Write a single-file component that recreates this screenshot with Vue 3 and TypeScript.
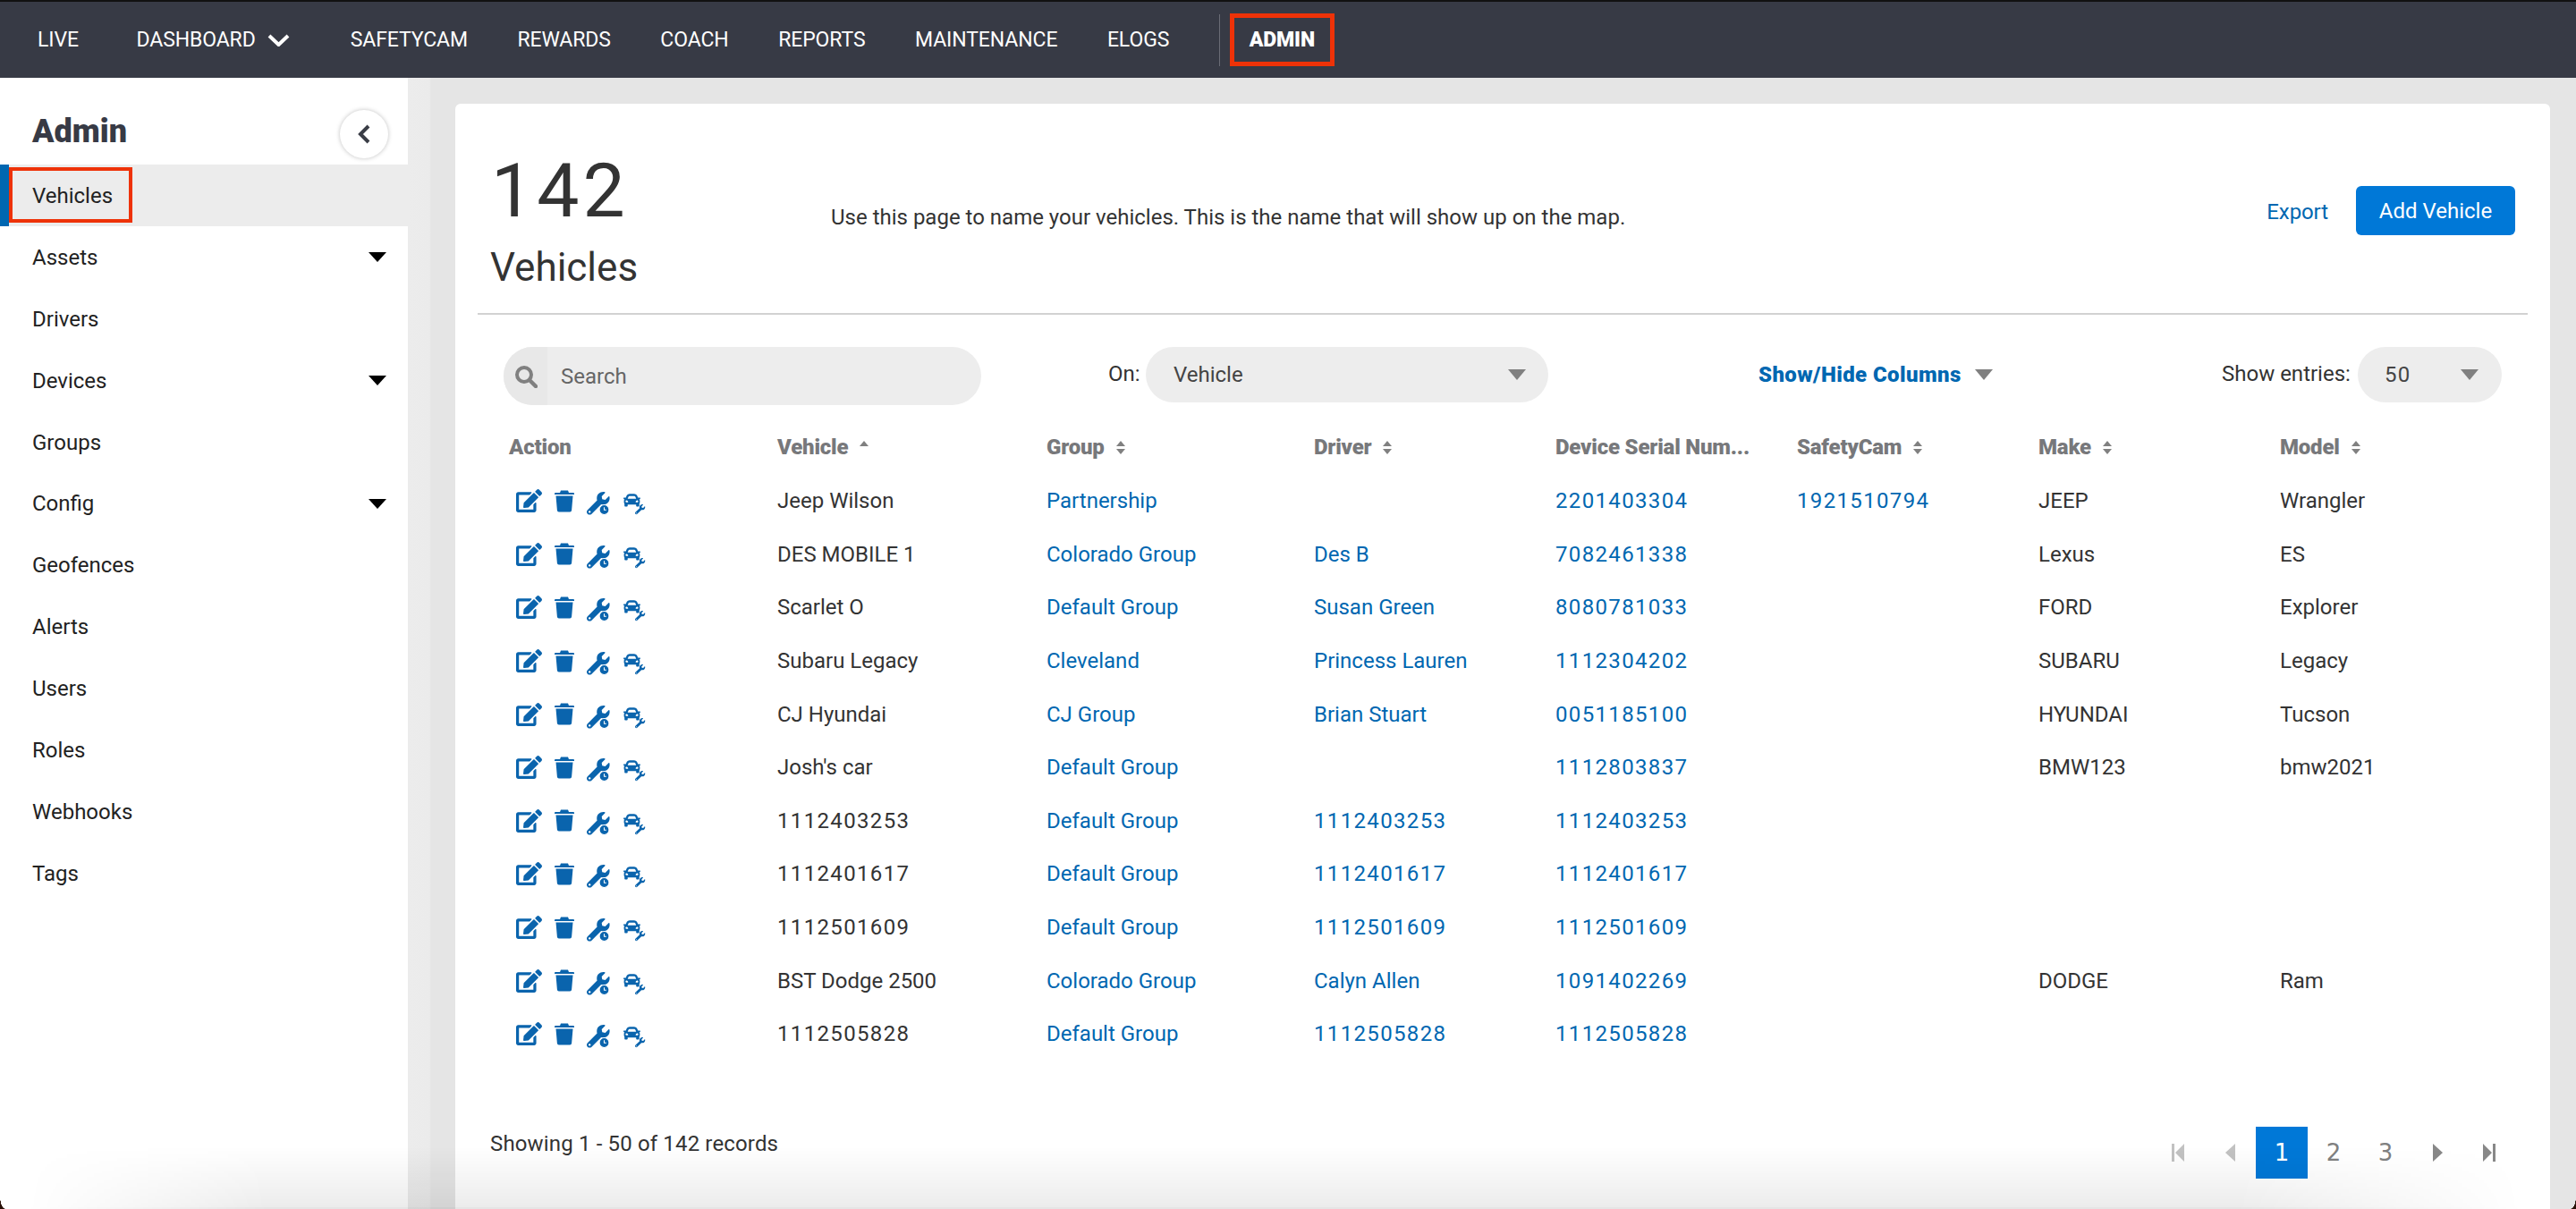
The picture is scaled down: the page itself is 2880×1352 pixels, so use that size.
<script setup lang="ts">
interface Row {
  vehicle: string
  group: string
  driver: string
  serial: string
  cam: string
  make: string
  model: string
}
const navItems = ['SAFETYCAM', 'REWARDS', 'COACH', 'REPORTS', 'MAINTENANCE', 'ELOGS']
const sideItems = [
  { name: 'Vehicles', caret: false, active: true },
  { name: 'Assets', caret: true, active: false },
  { name: 'Drivers', caret: false, active: false },
  { name: 'Devices', caret: true, active: false },
  { name: 'Groups', caret: false, active: false },
  { name: 'Config', caret: true, active: false },
  { name: 'Geofences', caret: false, active: false },
  { name: 'Alerts', caret: false, active: false },
  { name: 'Users', caret: false, active: false },
  { name: 'Roles', caret: false, active: false },
  { name: 'Webhooks', caret: false, active: false },
  { name: 'Tags', caret: false, active: false },
]
const columns = [
  { label: 'Vehicle', sort: 'up' },
  { label: 'Group', sort: 'both' },
  { label: 'Driver', sort: 'both' },
  { label: 'Device Serial Num...', sort: 'none' },
  { label: 'SafetyCam', sort: 'both' },
  { label: 'Make', sort: 'both' },
  { label: 'Model', sort: 'both' },
]
const rows: Row[] = [
  { vehicle: 'Jeep Wilson', group: 'Partnership', driver: '', serial: '2201403304', cam: '1921510794', make: 'JEEP', model: 'Wrangler' },
  { vehicle: 'DES MOBILE 1', group: 'Colorado Group', driver: 'Des B', serial: '7082461338', cam: '', make: 'Lexus', model: 'ES' },
  { vehicle: 'Scarlet O', group: 'Default Group', driver: 'Susan Green', serial: '8080781033', cam: '', make: 'FORD', model: 'Explorer' },
  { vehicle: 'Subaru Legacy', group: 'Cleveland', driver: 'Princess Lauren', serial: '1112304202', cam: '', make: 'SUBARU', model: 'Legacy' },
  { vehicle: 'CJ Hyundai', group: 'CJ Group', driver: 'Brian Stuart', serial: '0051185100', cam: '', make: 'HYUNDAI', model: 'Tucson' },
  { vehicle: "Josh's car", group: 'Default Group', driver: '', serial: '1112803837', cam: '', make: 'BMW123', model: 'bmw2021' },
  { vehicle: '1112403253', group: 'Default Group', driver: '1112403253', serial: '1112403253', cam: '', make: '', model: '' },
  { vehicle: '1112401617', group: 'Default Group', driver: '1112401617', serial: '1112401617', cam: '', make: '', model: '' },
  { vehicle: '1112501609', group: 'Default Group', driver: '1112501609', serial: '1112501609', cam: '', make: '', model: '' },
  { vehicle: 'BST Dodge 2500', group: 'Colorado Group', driver: 'Calyn Allen', serial: '1091402269', cam: '', make: 'DODGE', model: 'Ram' },
  { vehicle: '1112505828', group: 'Default Group', driver: '1112505828', serial: '1112505828', cam: '', make: '', model: '' },
]
const isNum = (v: string): boolean => /^\d+$/.test(v)
const wrench = 'M507.73 109.1c-2.24-9.03-13.54-12.09-20.12-5.51l-74.36 74.36-67.88-11.31-11.31-67.88 74.36-74.36c6.62-6.62 3.43-17.9-5.66-20.16-47.38-11.74-99.55.91-136.58 37.93-39.64 39.64-50.55 97.1-34.05 147.2L18.74 402.76c-24.99 24.99-24.99 65.51 0 90.5 24.99 24.99 65.51 24.99 90.5 0l213.21-213.21c50.12 16.71 107.47 5.68 147.37-34.22 37.07-37.07 49.7-89.32 37.91-136.73zM64 472c-13.25 0-24-10.75-24-24 0-13.26 10.75-24 24-24s24 10.74 24 24c0 13.25-10.75 24-24 24z'
const car = 'M499.99 176h-59.87l-16.64-41.6C406.38 91.63 365.57 64 319.5 64h-127c-46.06 0-86.88 27.63-103.99 70.4L71.87 176H12.01C4.2 176-1.53 183.34.37 190.91l6 24C7.7 220.25 12.5 224 18.01 224h20.07C24.65 235.73 16 252.78 16 272v48c0 16.12 6.16 30.67 16 41.93V416c0 17.67 14.33 32 32 32h32c17.67 0 32-14.33 32-32v-32h256v32c0 17.67 14.33 32 32 32h32c17.67 0 32-14.33 32-32v-54.07c9.84-11.25 16-25.8 16-41.93v-48c0-19.22-8.65-36.27-22.07-48H494c5.51 0 10.31-3.75 11.64-9.09l6-24c1.89-7.57-3.84-14.91-11.65-14.91zm-352.06-17.83c7.29-18.22 24.94-30.17 44.57-30.17h127c19.63 0 37.28 11.95 44.57 30.17L384 208H128l19.93-49.83zM96 319.8c-19.2 0-32-12.76-32-31.9S76.8 256 96 256s48 28.71 48 47.85-28.8 15.95-48 15.95zm320 0c-19.2 0-48 3.19-48-15.95S396.8 256 416 256s32 12.76 32 31.9-12.8 31.9-32 31.9z'
const edit = 'M402.6 83.2l90.2 90.2c3.8 3.8 3.8 10 0 13.8L274.4 405.6l-92.8 10.3c-12.4 1.4-22.9-9.1-21.5-21.5l10.3-92.8L388.8 83.2c3.8-3.8 10-3.8 13.8 0zm162-22.9l-48.8-48.8c-15.2-15.2-39.9-15.2-55.2 0l-35.4 35.4c-3.8 3.8-3.8 10 0 13.8l90.2 90.2c3.8 3.8 10 3.8 13.8 0l35.4-35.4c15.2-15.3 15.2-40 0-55.2zM384 346.2V448H64V128h229.8c3.2 0 6.2-1.3 8.5-3.5l40-40c7.6-7.6 2.2-20.5-8.5-20.5H48C21.5 64 0 85.5 0 112v352c0 26.5 21.5 48 48 48h352c26.5 0 48-21.5 48-48V306.2c0-10.7-12.9-16-20.5-8.5l-40 40c-2.2 2.3-3.5 5.3-3.5 8.5z'
</script>

<template>
  <div class="app">
    <header class="nav">
      <span class="nav-link">LIVE</span>
      <span class="nav-link dash">
        DASHBOARD
        <svg class="dash-chev" width="25" height="14" viewBox="0 0 25 14"><path d="M2 2l10.500 10L23 2" fill="none" stroke="#fff" stroke-width="4" /></svg>
      </span>
      <span v-for="item in navItems" :key="item" class="nav-link">{{ item }}</span>
      <span class="nav-sep"></span>
      <span class="nav-admin">ADMIN</span>
    </header>

    <div class="body">
      <aside class="side">
        <div class="side-head">
          <h2 class="side-title">Admin</h2>
          <button class="collapse" type="button">
            <svg width="16" height="22" viewBox="0 0 16 22"><path d="M13 2L4 11l9 9" fill="none" stroke="#3a3d46" stroke-width="4" /></svg>
          </button>
        </div>
        <div
          v-for="item in sideItems"
          :key="item.name"
          class="side-item"
          :class="{ active: item.active }"
        >
          <span class="side-label">{{ item.name }}</span>
          <span v-if="item.caret" class="side-caret"></span>
        </div>
      </aside>

      <main class="main">
        <section class="card">
          <div class="head">
            <div class="count">
              <div class="count-num">142</div>
              <div class="count-name">Vehicles</div>
            </div>
            <p class="lead">Use this page to name your vehicles. This is the name that will show up on the map.</p>
            <a class="export">Export</a>
            <button class="add" type="button">Add Vehicle</button>
          </div>

          <div class="tools">
            <div class="search">
              <span class="search-icon">
                <svg width="26" height="26" viewBox="0 0 26 26"><circle cx="11" cy="11" r="8" fill="none" stroke="#808080" stroke-width="4" /><path d="M17 17l7 7" stroke="#808080" stroke-width="4.500" stroke-linecap="round" /></svg>
              </span>
              <span class="search-text">Search</span>
            </div>
            <span class="on-label">On:</span>
            <div class="pill on-select">
              <span>Vehicle</span>
              <i class="tri"></i>
            </div>
            <div class="showhide">
              <span>Show/Hide Columns</span>
              <i class="tri"></i>
            </div>
            <span class="entries-label">Show entries:</span>
            <div class="pill entries">
              <span class="num">50</span>
              <i class="tri"></i>
            </div>
          </div>

          <div class="table">
            <div class="tr th">
              <div class="cell">Action</div>
              <div v-for="col in columns" :key="col.label" class="cell">
                <span>{{ col.label }}</span>
                <svg v-if="col.sort !== 'none'" class="sort" width="12" height="15" viewBox="0 0 12 15">
                  <path d="M6 0l5 6H1z" fill="#808080" />
                  <path v-if="col.sort === 'both'" d="M6 15l5-6H1z" fill="#808080" />
                </svg>
              </div>
            </div>
            <div v-for="row in rows" :key="row.vehicle" class="tr">
              <div class="cell actions">
                <svg class="ic" width="29" height="26" viewBox="0 0 576 512"><path :d="edit" /></svg>
                <svg class="ic" width="22" height="25" viewBox="0 0 22 25"><path d="M7 .5h8l1 2.500h5a1 1 0 0 1 1 1v1H0V4a1 1 0 0 1 1-1h5zM1.500 6.500h19l-1.400 16.300a2 2 0 0 1-2 1.800H4.900a2 2 0 0 1-2-1.800z" /></svg>
                <svg class="ic low" width="27" height="26" viewBox="0 0 27 26">
                  <g transform="scale(.05)"><path :d="wrench" /></g>
                  <circle cx="19.500" cy="20" r="5.500" stroke="#fff" stroke-width="1.200" />
                  <path d="M19.500 17.200v3h2.300" fill="none" stroke="#fff" stroke-width="1.100" />
                </svg>
                <svg class="ic low" width="25" height="26" viewBox="0 0 25 26">
                  <g transform="scale(.037)"><path :d="car" /></g>
                  <g transform="translate(13 14) scale(.022)"><path :d="wrench" stroke="#fff" stroke-width="30" paint-order="stroke" /></g>
                </svg>
              </div>
              <div class="cell" :class="{ num: isNum(row.vehicle) }">{{ row.vehicle }}</div>
              <div class="cell link">{{ row.group }}</div>
              <div class="cell link" :class="{ num: isNum(row.driver) }">{{ row.driver }}</div>
              <div class="cell link num">{{ row.serial }}</div>
              <div class="cell link num">{{ row.cam }}</div>
              <div class="cell">{{ row.make }}</div>
              <div class="cell">{{ row.model }}</div>
            </div>
          </div>

          <div class="foot">
            <span class="showing">Showing 1 - 50 of 142 records</span>
            <nav class="pager">
              <span class="pg off"><svg width="14" height="20" viewBox="0 0 14 20"><path d="M0 0h3v20H0zM14 0v20L4 10z" /></svg></span>
              <span class="pg off"><svg width="11" height="20" viewBox="0 0 11 20"><path d="M11 0v20L0 10z" /></svg></span>
              <span class="pg current">1</span>
              <span class="pg">2</span>
              <span class="pg">3</span>
              <span class="pg"><svg width="11" height="20" viewBox="0 0 11 20"><path d="M0 0v20l11-10z" /></svg></span>
              <span class="pg"><svg width="14" height="20" viewBox="0 0 14 20"><path d="M0 0v20l10-10zM11 0h3v20h-3z" /></svg></span>
            </nav>
          </div>
        </section>
      </main>
    </div>
    <div class="shade"></div>
    <span class="corner left"></span>
    <span class="corner right"></span>
  </div>
</template>

<style>
html,
body {
  margin: 0;
  background: #fff;
}
</style>

<style scoped>
.app {
  position: relative;
  width: 2880px;
  height: 1352px;
  overflow: hidden;
  display: flex;
  flex-direction: column;
  font-family: Roboto, "Liberation Sans", sans-serif;
  font-size: 24px;
  color: #333;
}
.nav {
  box-sizing: border-box;
  height: 87px;
  flex: none;
  display: flex;
  align-items: center;
  padding-left: 42px;
  background: #373a45;
  border-top: 2px solid #111;
  color: #fff;
  font-size: 23px;
  letter-spacing: -0.1px;
}
.nav-link {
  margin-right: 55.5px;
  white-space: nowrap;
}
.dash {
  display: flex;
  align-items: center;
  margin-left: 9px;
  margin-right: 68px;
}
.dash-chev {
  margin-left: 13px;
}
.nav-sep {
  width: 1px;
  height: 58px;
  background: #6a6c75;
  margin-right: 11px;
}
.nav-admin {
  box-sizing: border-box;
  width: 117px;
  height: 59px;
  border: 5px solid #ee3208;
  display: flex;
  align-items: center;
  justify-content: center;
  font-weight: 900;
}
.body {
  flex: 1;
  display: flex;
  min-height: 0;
}
.side {
  width: 456px;
  flex: none;
  background: #fff;
}
.side-head {
  box-sizing: border-box;
  height: 97px;
  display: flex;
  align-items: center;
  justify-content: space-between;
  padding: 23px 22px 0 36px;
}
.side-title {
  margin: 0;
  font-size: 36px;
  font-weight: 900;
  color: #373a45;
}
.collapse {
  width: 54px;
  height: 54px;
  border: none;
  border-radius: 50%;
  background: #fff;
  box-shadow: 0 0 5px rgba(0, 0, 0, 0.25);
  display: flex;
  align-items: center;
  justify-content: center;
  padding: 0;
  margin-top: 6px;
}
.side-item {
  box-sizing: border-box;
  height: 68.9px;
  display: flex;
  align-items: center;
  justify-content: space-between;
  padding: 1px 24px 0 36px;
  color: #222;
}
.side-caret {
  width: 0;
  height: 0;
  border-left: 10px solid transparent;
  border-right: 10px solid transparent;
  border-top: 11px solid #000;
}
.side-item.active {
  background: #ececec;
  border-left: 10px solid #0067b1;
  padding: 0;
}
.active .side-label {
  box-sizing: border-box;
  width: 138px;
  height: 62px;
  border: 4px solid #ee3208;
  display: flex;
  align-items: center;
  padding: 2px 0 0 22px;
}
.main {
  flex: 1;
  min-width: 0;
  padding: 29px 29px 0 53px;
  background: linear-gradient(to right, #ececec 0, #ebebeb 24px, #e5e5e5 26px);
}
.card {
  height: 100%;
  box-sizing: border-box;
  background: #fff;
  border-radius: 6px 6px 0 0;
  padding: 0 25px;
}
.head {
  box-sizing: border-box;
  height: 236px;
  display: flex;
  align-items: center;
  border-bottom: 2px solid #d2d2d2;
}
.count {
  width: 381px;
  padding-left: 14px;
  box-sizing: content-box;
  flex: none;
  padding-top: 26px;
}
.count-num {
  font-size: 84px;
  line-height: 96px;
  letter-spacing: 4px;
  margin-left: 1px;
}
.count-name {
  font-size: 44px;
  line-height: 56px;
  margin-top: 9px;
}
.lead {
  margin: 20px 0 0;
  flex: 1;
  color: #333;
}
.export {
  color: #0067b1;
  margin-top: 7px;
  margin-right: 31px;
  letter-spacing: -0.1px;
}
.add {
  box-sizing: border-box;
  width: 178px;
  height: 55px;
  margin-right: 14px;
  margin-top: 5px;
  border: none;
  border-radius: 6px;
  background: #0078d7;
  color: #fff;
  font: inherit;
  padding: 0;
}
.tools {
  display: flex;
  align-items: flex-start;
  padding-top: 36px;
  height: 65px;
  margin-left: 29px;
}
.search {
  width: 534px;
  height: 65px;
  border-radius: 33px;
  background: #ededed;
  display: flex;
  align-items: center;
  overflow: hidden;
  color: #666;
}
.search-icon {
  width: 49px;
  height: 100%;
  flex: none;
  background: #e8e8e8;
  display: flex;
  align-items: center;
  padding-left: 12px;
  box-sizing: border-box;
}
.search-text {
  margin-left: 15px;
}
.on-label {
  margin-left: 142px;
  width: 42px;
  line-height: 60px;
  color: #333;
}
.pill {
  height: 62px;
  border-radius: 31px;
  background: #ededed;
  display: flex;
  align-items: center;
  justify-content: space-between;
  box-sizing: border-box;
  color: #444;
}
.on-select {
  width: 450px;
  padding: 0 25px 0 31px;
}
.tri {
  display: block;
  width: 0;
  height: 0;
  border-left: 10px solid transparent;
  border-right: 10px solid transparent;
  border-top: 12px solid #808080;
}
.showhide {
  margin-left: 235px;
  width: 262px;
  height: 62px;
  display: flex;
  align-items: center;
  justify-content: space-between;
  color: #0067b1;
  font-weight: 900;
  letter-spacing: 0.4px;
}
.entries-label {
  margin-left: 256px;
  width: 152px;
  line-height: 60px;
  color: #333;
}
.entries {
  width: 161px;
  padding: 0 26px 0 30px;
}
.table {
  margin: 17px 0 0 35px;
}
.tr {
  display: grid;
  grid-template-columns: 300px 301px 299px 270px 270px 270px 270px 1fr;
  height: 59.6px;
  align-items: center;
  padding-top: 1px;
  box-sizing: border-box;
}
.th {
  height: 60px;
  color: #77787b;
  font-weight: 900;
  letter-spacing: -0.2px;
  padding-top: 0;
}
.cell {
  display: flex;
  align-items: center;
  white-space: nowrap;
  min-width: 0;
}
.sort {
  flex: none;
  margin-left: 12px;
}
.link {
  color: #0067b1;
}
.num {
  letter-spacing: 1.35px;
}
.actions {
  padding-left: 8px;
  gap: 14px;
}
.ic {
  flex: none;
  fill: #0a64ad;
}
.low {
  margin-top: 6px;
}
.foot {
  display: flex;
  align-items: flex-start;
  justify-content: space-between;
  margin-top: 74px;
  padding-left: 14px;
}
.showing {
  margin-top: 5px;
  letter-spacing: 0.15px;
}
.pager {
  display: flex;
  margin-right: 14px;
}
.pg {
  width: 58px;
  height: 58px;
  display: flex;
  align-items: center;
  justify-content: center;
  font-family: "DejaVu Sans", sans-serif;
  font-size: 26px;
  color: #808080;
  fill: #888;
}
.pg.off {
  fill: #c2c2c2;
}
.pg.current {
  background: #0078d7;
  color: #fff;
}
.shade {
  position: absolute;
  left: 0;
  right: 0;
  bottom: 0;
  height: 70px;
  pointer-events: none;
  background: linear-gradient(to bottom, rgba(0, 0, 0, 0), rgba(0, 0, 0, 0.075));
  border-bottom: 2px solid rgba(0, 0, 0, 0.1);
  box-sizing: border-box;
  -webkit-mask-image: linear-gradient(to right, transparent 30px, #000 300px, #000 2500px, transparent 2820px);
  mask-image: linear-gradient(to right, transparent 30px, #000 300px, #000 2500px, transparent 2820px);
}
.corner {
  position: absolute;
  bottom: 0;
  width: 6px;
  height: 14px;
  pointer-events: none;
}
.corner.left {
  left: 0;
  background: radial-gradient(ellipse 6px 14px at 100% 0, transparent 96%, #2a1208 100%);
}
.corner.right {
  right: 0;
  background: radial-gradient(ellipse 6px 14px at 0 0, transparent 96%, #2a1208 100%);
}
</style>
